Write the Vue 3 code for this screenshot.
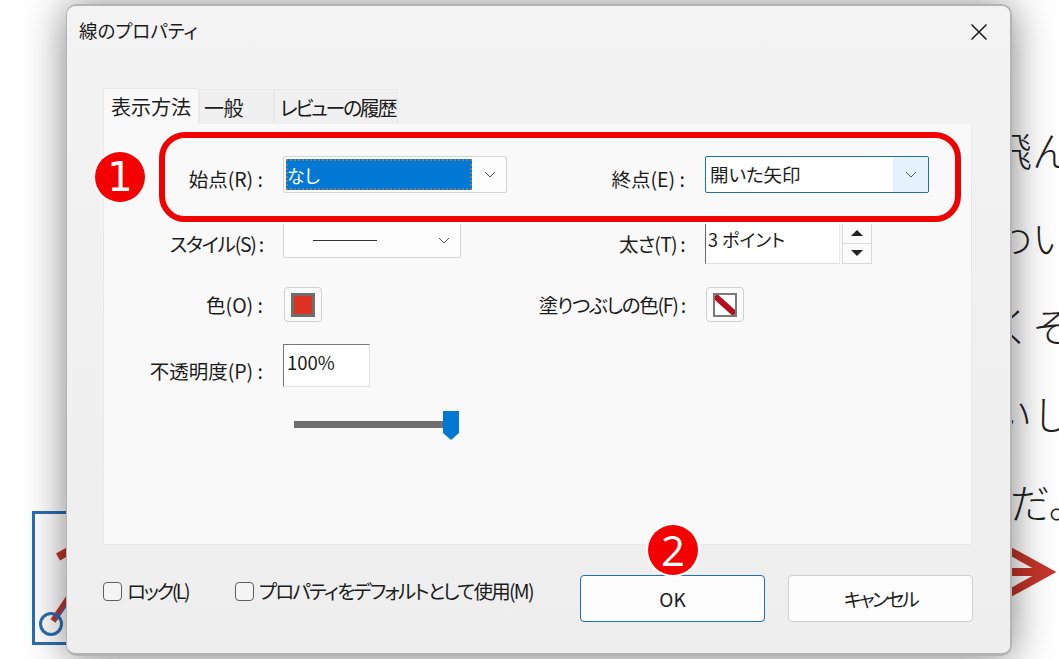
<script setup>
const docLines = [
  { text: '飛ん', cls: 'l1' },
  { text: 'わい', cls: 'l2' },
  { text: 'くそ', cls: 'l3' },
  { text: 'いし', cls: 'l4' },
  { text: 'だ。', cls: 'l5' },
]
const tabs = [
  { label: '表示方法', active: true, cls: 't1' },
  { label: '一般', active: false, cls: 't2' },
  { label: 'レビューの履歴', active: false, cls: 't3' },
]
</script>

<template>
  <div class="page">
    <svg class="canvas" width="1059" height="659" viewBox="0 0 1059 659">
      <rect x="33.5" y="512.5" width="120" height="131" fill="none" stroke="#2c6db3" stroke-width="3" />
      <path d="M58 557 L74 548" stroke="#c4352a" stroke-width="8" fill="none" />
      <path d="M53 621 L74 590" stroke="#c4352a" stroke-width="6" fill="none" />
      <path d="M56 620 L74 594" stroke="#5a62a8" stroke-width="2" fill="none" />
      <circle cx="51" cy="624" r="10.5" fill="none" stroke="#2c6db3" stroke-width="3" />
      <path d="M988 539 L1048 572 L988 605" stroke="#c4352a" stroke-width="8" fill="none" />
      <path d="M1000 572 L1044 572" stroke="#c4352a" stroke-width="8" fill="none" />
    </svg>

    <div class="doc">
      <div v-for="line in docLines" :key="line.text" class="doc-line" :class="line.cls">{{ line.text }}</div>
    </div>

    <div class="dialog">
      <header class="titlebar">
        <span class="title">線のプロパティ</span>
        <svg class="close" width="18" height="18" viewBox="0 0 18 18">
          <path d="M1.5 1.5 L16.5 16.5 M16.5 1.5 L1.5 16.5" stroke="#1a1a1a" stroke-width="1.5" fill="none" />
        </svg>
      </header>

      <div class="body">
        <div class="tabs">
          <div v-for="tab in tabs" :key="tab.label" class="tab" :class="[tab.cls, { active: tab.active }]">{{ tab.label }}</div>
        </div>

        <div class="panel">
          <div class="form">
            <label class="lab lab1">始点(R) :</label>
            <div class="combo">
              <div class="sel"><span>なし</span></div>
              <svg class="chev" width="12" height="7" viewBox="0 0 12 7"><path d="M1 1 L6 6 L11 1" stroke="#555" fill="none" /></svg>
            </div>
            <label class="lab lab1">終点(E) :</label>
            <div class="combo focus">
              <span class="val">開いた矢印</span>
              <div class="drop"><svg width="12" height="7" viewBox="0 0 12 7"><path d="M1 1 L6 6 L11 1" stroke="#555" fill="none" /></svg></div>
            </div>

            <label class="lab lab2 kana">スタイル(S) :</label>
            <div class="combo style">
              <span class="stroke-line"></span>
              <svg class="chev" width="12" height="7" viewBox="0 0 12 7"><path d="M1 1 L6 6 L11 1" stroke="#555" fill="none" /></svg>
            </div>
            <label class="lab lab2 tight">太さ(T) :</label>
            <div class="spin">
              <div class="spin-input">3 ポイント</div>
              <div class="spin-btns">
                <div class="spin-btn"><i class="tri up"></i></div>
                <div class="spin-btn"><i class="tri down"></i></div>
              </div>
            </div>

            <label class="lab lab3">色(O) :</label>
            <button class="swatch-btn">
              <svg width="24" height="24" viewBox="0 0 24 24">
                <rect x="1.5" y="1.5" width="21" height="21" fill="#dc3223" stroke="#6d6d6d" stroke-width="3" />
              </svg>
            </button>
            <label class="lab lab3 kana">塗りつぶしの色(F) :</label>
            <button class="swatch-btn">
              <svg width="24" height="24" viewBox="0 0 24 24">
                <rect x="1.5" y="1.5" width="21" height="21" fill="#fff" />
                <path d="M2 3 L22 21" stroke="#b30f1c" stroke-width="6" fill="none" />
                <rect x="1" y="1" width="22" height="22" fill="none" stroke="#7a7a7a" stroke-width="2" />
              </svg>
            </button>

            <label class="lab lab4">不透明度(P) :</label>
            <div class="opacity">100%</div>
            <div class="blank"></div>
            <div class="blank"></div>

            <div class="blank"></div>
            <div class="slider">
              <div class="track"></div>
              <svg class="thumb" width="16" height="29" viewBox="0 0 16 29"><path d="M0 0 H16 V22 L8 29 L0 22 Z" fill="#0078d4" /></svg>
            </div>
          </div>
          <div class="ring"></div>
          <div class="badge b1">1</div>
        </div>
      </div>

      <footer class="footer">
        <label class="check c1"><i class="box"></i><span>ロック(L)</span></label>
        <label class="check c2"><i class="box"></i><span>プロパティをデフォルトとして使用(M)</span></label>
        <button class="btn ok">OK</button>
        <button class="btn cancel">キャンセル</button>
        <div class="badge b2">2</div>
      </footer>
    </div>
  </div>
</template>

<style>
html, body { margin: 0; background: #fff; }
</style>

<style scoped>
.page {
  position: relative;
  width: 1059px;
  height: 659px;
  overflow: hidden;
  background: #fff;
  font-family: "Noto Sans CJK JP", "Noto Sans", sans-serif;
  color: #1b1b1b;
}
.canvas { position: absolute; left: 0; top: 0; }
.doc {
  position: absolute;
  left: 992px;
  top: 105px;
  width: 90px;
  font-size: 40px;
  font-weight: 300;
  line-height: 88px;
  white-space: nowrap;
  color: #222;
}
.doc-line { height: 88px; }
.doc-line.l5 { margin-left: 18px; }

.dialog {
  position: absolute;
  left: 66px;
  top: 4px;
  width: 946px;
  height: 652px;
  box-sizing: border-box;
  border: 1px solid #b4b4b4;
  border-width: 2px 2px 3px 1px;
  border-radius: 10px;
  background: linear-gradient(#f3f3f3, #eeeeee);
  box-shadow: 0 2px 40px rgba(0, 0, 0, .5);
  display: flex;
  flex-direction: column;
}
.titlebar {
  height: 51px;
  flex: none;
  display: flex;
  align-items: center;
  justify-content: space-between;
  padding: 0 22px 3px 12px;
}
.title { font-size: 18.5px; font-feature-settings: "palt"; font-weight: 400; margin-bottom: 4px; }
.close { display: block; }
.body { padding: 28px 38px 0 36px; flex: none; }
.tabs { display: flex; height: 36px; align-items: flex-end; }
.tab {
  box-sizing: border-box;
  height: 35px;
  font-size: 20px;
  line-height: 36px;
  background: #f0f0f0;
  border: 1px solid #e9e9e9;
  border-bottom: 0;
  white-space: nowrap;
  font-feature-settings: "palt";
}
.tab.t1 { width: 96px; height: 36px; padding-left: 7px; background: #f9f9f9; }
.tab.t2 { width: 75px; padding-left: 4px; letter-spacing: -.6px; }
.tab.t3 { width: 124px; padding-left: 5px; letter-spacing: -2.4px; }

.panel {
  position: relative;
  box-sizing: border-box;
  height: 421px;
  width: 869px;
  background: #f9f9f9;
  border: 1px solid #e9e9e9;
  border-top: 0;
}
.form {
  display: grid;
  grid-template-columns: 179px 224px 198px 224px;
  grid-template-rows: 66px 65px 57px 66px 40px;
  padding-top: 32px;
  align-items: start;
}
.lab {
  font-size: 19.5px;
  line-height: 26px;
  text-align: right;
  padding-right: 20px;
  white-space: nowrap;
  font-feature-settings: "palt";
}
.lab.kana { letter-spacing: -1.25px; }
.lab.tight { letter-spacing: -.8px; }
.lab1 { margin-top: 10px; }
.lab2 { margin-top: 9px; }
.lab3 { margin-top: 5px; }
.lab4 { margin-top: 14px; }

.combo {
  position: relative;
  box-sizing: border-box;
  width: 224px;
  height: 37px;
  background: #fdfdfd;
  border: 1px solid #d4d4d4;
  border-radius: 2px;
  font-size: 18px;
}
.chev { position: absolute; right: 10px; top: 14px; }
.sel {
  position: absolute;
  left: 2px;
  top: 2px;
  width: 186px;
  height: 31px;
  box-sizing: border-box;
  background: #0078d4;
  outline: 2px dotted #7d7d7d;
  outline-offset: -2px;
  color: #fff;
  padding-left: 1px;
  line-height: 32px;
  font-feature-settings: "palt";
}
.combo.focus { border-color: #1f6fb2; background: #fff; display: flex; }
.val { flex: 1; padding-left: 4px; line-height: 35px; font-size: 18.5px; font-feature-settings: "palt"; }
.drop {
  width: 35px;
  background: #e5f1fb;
  display: flex;
  align-items: center;
  justify-content: center;
}
.combo.style { width: 178px; height: 35px; margin-top: 1px; }
.combo.style .chev { right: 10px; top: 13px; }
.stroke-line {
  position: absolute;
  left: 29px;
  top: 16px;
  width: 64px;
  height: 1px;
  background: #333;
}
.spin { display: flex; margin-top: 1px; }
.spin-input {
  box-sizing: border-box;
  width: 135px;
  height: 41px;
  background: #fff;
  border-left: 1px solid #666;
  border-bottom: 1px solid #e0e0e0;
  border-right: 1px solid #e8e8e8;
  padding-left: 2px;
  font-size: 18px;
  line-height: 33px;
  font-feature-settings: "palt";
}
.spin-btns { margin-left: 2px; display: flex; flex-direction: column; width: 30px; height: 41px; }
.spin-btn {
  flex: 1;
  box-sizing: border-box;
  background: #fbfbfb;
  border: 1px solid #d8d8d8;
  border-top: 0;
  display: flex;
  align-items: center;
  justify-content: center;
}
.tri { width: 0; height: 0; border-left: 6px solid transparent; border-right: 6px solid transparent; }
.tri.up { border-bottom: 6px solid #222; }
.tri.down { border-top: 6px solid #222; }
.swatch-btn {
  box-sizing: border-box;
  width: 38px;
  height: 35px;
  margin: 0 0 0 1px;
  padding: 0;
  background: #fbfbfb;
  border: 1px solid #d0d0d0;
  border-radius: 4px;
  display: flex;
  align-items: center;
  justify-content: center;
}
.swatch-btn svg { display: block; }
.opacity {
  box-sizing: border-box;
  width: 87px;
  height: 43px;
  background: #fff;
  border: 1px solid #e2e2e2;
  border-top-color: #777;
  border-left-color: #777;
  padding-left: 3px;
  font-size: 18.5px;
  line-height: 35px;
}
.slider { position: relative; margin: 1px 0 0 11px; width: 164px; height: 30px; }
.track { position: absolute; left: 0; top: 10px; width: 150px; height: 7px; background: #707070; }
.thumb { position: absolute; left: 149px; top: 0; display: block; }

.ring {
  position: absolute;
  left: 55px;
  top: 8px;
  width: 802px;
  height: 90px;
  box-sizing: border-box;
  border: 6px solid #f00000;
  border-radius: 26px;
  box-shadow: 0 0 0 2px #fff;
  pointer-events: none;
}
.badge {
  position: absolute;
  width: 50px;
  height: 50px;
  border-radius: 50%;
  background: #f40000;
  box-shadow: 0 0 0 2px #fff;
  color: #fff;
  text-align: center;
  font-family: "DejaVu Sans", sans-serif;
  font-size: 40px;
  line-height: 50px;
}
.b1 { left: -9px; top: 28px; }
.b2 { left: 581px; top: -20px; font-family: "Open Sans", sans-serif; font-size: 42px; }

.footer {
  position: relative;
  flex: 1;
  display: flex;
  align-items: flex-start;
  padding: 0 38px 0 36px;
}
.check {
  display: flex;
  align-items: center;
  font-size: 19.5px;
  line-height: 26px;
  font-feature-settings: "palt";
  white-space: nowrap;
  margin-top: 33px;
  flex: none;
}
.box {
  display: block;
  box-sizing: border-box;
  width: 19px;
  height: 19px;
  border: 1px solid #5f5f5f;
  border-radius: 4px;
  background: #f4f4f4;
  margin-right: 5px;
}
.c1 { width: 132px; letter-spacing: -2.4px; }
.c2 { width: 345px; letter-spacing: -1.75px; }
.btn {
  flex: none;
  box-sizing: border-box;
  width: 185px;
  height: 47px;
  margin: 30px 0 0;
  font-family: inherit;
  font-size: 19px;
  color: #1b1b1b;
  background: #fdfdfd;
  border: 1px solid #d0d0d0;
  border-radius: 4px;
  padding: 0;
  font-feature-settings: "palt";
}
.btn.ok { border-color: #1f6fb2; }
.btn.cancel { margin-left: 23px; letter-spacing: -2.6px; }
</style>
